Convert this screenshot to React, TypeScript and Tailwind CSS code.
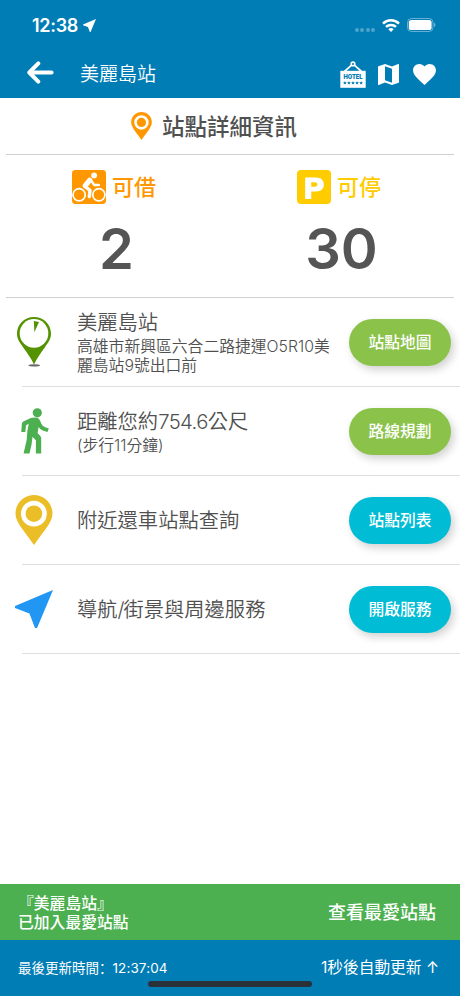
import React from 'react';
import { clsx } from 'clsx';

interface IconProps {
    className?: string;
}

const NearMeIcon: React.FC<IconProps> = ({ className }) => (
    <svg viewBox="3 3 18 18" fill="currentColor" className={className}>
        <path d="M21 3L3 10.53v.98l6.84 2.65L12.48 21h.98L21 3z" />
    </svg>
);

const WifiIcon: React.FC<IconProps> = ({ className }) => (
    <svg viewBox="0 0 18 13" fill="none" stroke="currentColor" strokeWidth="2.5" className={className}>
        <path d="M1 4.6a11.4 11.4 0 0 1 16 0" />
        <path d="M4 7.9a7.2 7.2 0 0 1 10 0" />
        <path d="M9 13L6.3 10.3a3.9 3.9 0 0 1 5.4 0z" fill="currentColor" stroke="none" />
    </svg>
);

const BatteryIcon: React.FC<IconProps> = ({ className }) => (
    <svg viewBox="0 0 29 14" fill="none" className={className}>
        <rect x="0.5" y="0.5" width="25.5" height="13" rx="4" stroke="currentColor" strokeOpacity="0.4" />
        <rect x="1.8" y="2" width="22.8" height="10" rx="2.6" fill="currentColor" />
        <path d="M27.2 4.8v4.4c1.6-.6 1.6-3.8 0-4.4z" fill="currentColor" fillOpacity="0.5" />
    </svg>
);

const BackIcon: React.FC<IconProps> = ({ className }) => (
    <svg viewBox="0 0 27 23" fill="none" stroke="currentColor" strokeWidth="4" strokeLinecap="round" strokeLinejoin="round" className={className}>
        <path d="M11.3 2.4L2.3 11.5l9 9.1M2.8 11.5h21.8" />
    </svg>
);

const HotelIcon: React.FC<IconProps> = ({ className }) => (
    <svg viewBox="0 0 26 27" className={className}>
        <path d="M4.5 10.5L11.3 4.4M21.5 10.5L14.7 4.4" stroke="white" strokeWidth="1.7" fill="none" />
        <circle cx="13" cy="2.9" r="1.8" fill="none" stroke="white" strokeWidth="1.6" />
        <rect x="0.3" y="9.8" width="25.4" height="17" fill="white" />
        <text x="13" y="18.4" textAnchor="middle" textLength="19" lengthAdjust="spacingAndGlyphs" fill="#007db5" fontSize="6.4" fontWeight="900" fontFamily="Inter, sans-serif">HOTEL</text>
        {[4.9, 8.9, 13, 17.1, 21.1].map((x) => (
            <path key={x} transform={`translate(${x} 21.9)`} d="M0-1.7l.6 1.100h1.200l-.9.9.3 1.200L0 .9l-1.200.6.3-1.200-.9-.9h1.200z" fill="#007db5" />
        ))}
    </svg>
);

const MapIcon: React.FC<IconProps> = ({ className }) => (
    <svg viewBox="3 3 18 18" fill="currentColor" className={className}>
        <path d="M20.5 3l-.16.03L15 5.1 9 3 3.36 4.9c-.21.07-.36.25-.36.48V20.5c0 .28.22.5.5.5l.16-.03L9 18.9l6 2.1 5.64-1.9c.21-.07.36-.25.36-.48V3.5c0-.28-.22-.5-.5-.5zM15 19l-6-2.11V5l6 2.11V19z" />
    </svg>
);

const HeartIcon: React.FC<IconProps> = ({ className }) => (
    <svg viewBox="2 3 20 18.35" fill="currentColor" className={className}>
        <path d="M12 21.35l-1.45-1.32C5.4 15.36 2 12.28 2 8.5 2 5.42 4.42 3 7.5 3c1.74 0 3.41.81 4.5 2.09C13.09 3.81 14.76 3 16.5 3 19.58 3 22 5.42 22 8.5c0 3.78-3.4 6.86-8.55 11.54L12 21.35z" />
    </svg>
);

const PinIcon: React.FC<IconProps> = ({ className }) => (
    <svg viewBox="0 0 37 50" className={className}>
        <path d="M18.5 0C8.3 0 0 8.2 0 18.4 0 27.5 9.5 36.6 18.5 50 27.5 36.6 37 27.5 37 18.4 37 8.2 28.7 0 18.5 0z" fill="currentColor" />
        <circle cx="18.4" cy="18.7" r="10.6" fill="none" stroke="white" strokeWidth="4.6" />
    </svg>
);

const GaugePinIcon: React.FC<IconProps> = ({ className }) => (
    <svg viewBox="0 0 34 50" className={className}>
        <ellipse cx="17.2" cy="48.4" rx="5.8" ry="1.2" fill="#6b6b6b" />
        <path d="M17 0C7.6 0 0 7.4 0 16.6 0 22.6 3.4 26.5 6.2 30.4 9.8 35.4 14 41 17 47.4c3-6.4 7.2-12 10.8-17C30.6 26.5 34 22.6 34 16.6 34 7.4 26.4 0 17 0z" fill="#559200" />
        <circle cx="17" cy="16.4" r="14.3" fill="white" />
        <path d="M16.8 4.1l5.2.8-4.6 10.3z" fill="#559200" />
    </svg>
);

const WalkIcon: React.FC<IconProps> = ({ className }) => (
    <svg viewBox="0 0 28 46" fill="currentColor" className={className}>
        <circle cx="16.3" cy="4.8" r="4.6" />
        <path d="M9.800 10.100c2-.8 5.200-.8 6.900-.1 1.500.7 2.300 2.300 3 4.200.9 2.300 2.600 4.400 4.600 5.100l3.500 1.200-1.300 3.600-4.700-1.700c-1.900-.7-3.200-2-4.200-3.400l-1 6.200 2.500 2.500c.7.800 1.100 1.600 1.100 2.700V45.500h-5.300V32.200l-3.400-3.500-1 8.100-2 8.700H2.600l3.100-13.800.7-8.600 1.300-7.300-2.700 1.500-.7 6.700H.3l.5-7.600c.1-1.400.7-2.400 2-3.100z" />
    </svg>
);

const BikeIcon: React.FC<IconProps> = ({ className }) => (
    <svg viewBox="0 0 100 100" fill="none" stroke="white" className={className}>
        <rect width="100" height="100" rx="10" fill="#ff9800" stroke="none" />
        <circle cx="21" cy="73" r="18" strokeWidth="5" />
        <circle cx="79" cy="73" r="18" strokeWidth="5" />
        <circle cx="65" cy="16" r="8.5" fill="white" stroke="none" />
        <path d="M52 30L39 46" strokeWidth="15" strokeLinecap="round" strokeLinejoin="round" />
        <path d="M55 29l10 15h14" strokeWidth="7" strokeLinecap="round" strokeLinejoin="round" />
        <path d="M38 48l15 12-2 18" strokeWidth="10" strokeLinecap="round" strokeLinejoin="round" />
    </svg>
);

const ParkingIcon: React.FC<IconProps> = ({ className }) => (
    <svg viewBox="0 0 100 100" className={className}>
        <rect width="100" height="100" rx="12" fill="#ffcc00" />
        <path fillRule="evenodd" d="M24 22h32c15 0 23 8 23 20.500S71 63 56 63H42v22H24zM42 36v13h9c6 0 9-2 9-6.500s-3-6.500-9-6.500z" fill="white" />
    </svg>
);

interface StatProps {
    icon: React.ReactNode;
    label: string;
    value: number;
    labelClass: string;
}

const Stat: React.FC<StatProps> = ({ icon, label, value, labelClass }) => (
    <div className="flex flex-col items-center w-[110px]">
        <div className="flex items-center gap-[6px] h-[34px]">
            {icon}
            <span className={clsx('text-[22px] leading-[34px] font-medium', labelClass)}>{label}</span>
        </div>
        <span className="mt-[15px] pl-[5px] text-[56px] leading-[60px] font-semibold text-[#555]">{value}</span>
    </div>
);

interface RowProps {
    icon: React.ReactNode;
    title: React.ReactNode;
    detail?: string;
    action: string;
    color: string;
}

const Row: React.FC<RowProps> = ({ icon, title, detail, action, color }) => (
    <div className="h-[89px] flex flex-col">
        <div className="flex-1 flex items-center pr-[9px]">
            <div className="w-[77px] pl-[15px] flex-none">
                <div className="w-[38px] flex justify-center">{icon}</div>
            </div>
            <div className="w-[262px] flex-none pt-px font-[350]">
                <div className="text-[20.3px] leading-[26px] whitespace-nowrap">{title}</div>
                {detail && <div className="mt-px text-[15.8px] leading-[19px]">{detail}</div>}
            </div>
            <button
                className={clsx(
                    'ml-auto w-[102px] h-[47px] pt-[2px] flex-none rounded-full text-white text-[15.8px] font-medium shadow-[3px_4px_9px_rgba(0,0,0,0.18)]',
                    color
                )}
            >
                {action}
            </button>
        </div>
        <div className="h-px ml-[22px] bg-[#dedede]" />
    </div>
);

const App: React.FC = () => {
    return (
        <div className="w-[460px] h-[996px] flex flex-col overflow-hidden bg-white text-[#505050] font-['Inter','Noto_Sans_CJK_TC',sans-serif]">
            <header className="h-[98px] flex-none bg-[#007db5] text-white">
                {/* status bar */}
                <div className="h-[50px] flex items-center pl-[32px] pr-[24px]">
                    <span className="pt-px text-[18px] leading-none font-semibold tracking-[-0.3px]">12:38</span>
                    <NearMeIcon className="ml-[5px] w-[13px] h-[13px]" />
                    <div className="ml-auto flex items-center">
                        <div className="flex gap-[1.5px] mt-[10px] mr-[7px]">
                            {[0, 1, 2, 3].map((i) => (
                                <span key={i} className="w-[4px] h-[4px] rounded-full bg-white/30" />
                            ))}
                        </div>
                        <WifiIcon className="w-[18px] h-[13px] mr-[7px]" />
                        <BatteryIcon className="w-[29px] h-[14px]" />
                    </div>
                </div>
                {/* toolbar */}
                <div className="h-[48px] flex items-center pl-[27px] pr-[24px]">
                    <BackIcon className="w-[27px] h-[23px] -mt-[4px]" />
                    <h1 className="ml-[26px] pt-px text-[19px] leading-none font-[350]">美麗島站</h1>
                    <HotelIcon className="ml-auto w-[26px] h-[27px]" />
                    <MapIcon className="ml-[12px] w-[21px] h-[21px]" />
                    <HeartIcon className="ml-[14px] w-[23px] h-[21px]" />
                </div>
            </header>

            <main className="flex-1 flex flex-col">
                <div className="h-[57px] mx-[6px] flex items-center justify-center border-b border-[#d0d0d0] pr-[32px]">
                    <PinIcon className="w-[21px] h-[28px] text-[#ff9800]" />
                    <h2 className="ml-[10px] pt-px text-[22.5px] font-medium">站點詳細資訊</h2>
                </div>

                <div className="h-[143px] mx-[6px] pt-[15px] pl-[53px] pr-[60px] flex justify-between border-b border-[#d0d0d0]">
                    <Stat icon={<BikeIcon className="w-[34px] h-[34px]" />} label="可借" value={2} labelClass="text-[#ff9800]" />
                    <Stat icon={<ParkingIcon className="w-[34px] h-[34px]" />} label="可停" value={30} labelClass="text-[#ffcc00]" />
                </div>

                <Row
                    icon={<GaugePinIcon className="w-[34px] h-[50px]" />}
                    title="美麗島站"
                    detail="高雄市新興區六合二路捷運O5R10美麗島站9號出口前"
                    action="站點地圖"
                    color="bg-[#8bc34a]"
                />
                <Row
                    icon={<WalkIcon className="ml-[2px] w-[28px] h-[46px] text-[#4caf50]" />}
                    title={<>距離您約<span className="tracking-[-0.6px]">754.6</span>公尺</>}
                    detail="(步行11分鐘)"
                    action="路線規劃"
                    color="bg-[#8bc34a]"
                />
                <Row
                    icon={<PinIcon className="w-[38px] h-[50px] text-[#ebbe27]" />}
                    title="附近還車站點查詢"
                    action="站點列表"
                    color="bg-[#00bcd4]"
                />
                <Row
                    icon={<NearMeIcon className="w-[38px] h-[38px] text-[#2196f3]" />}
                    title={<>導航<span className="tracking-[-1.2px]">/</span>街景與周邊服務</>}
                    action="開啟服務"
                    color="bg-[#00bcd4]"
                />
            </main>

            <div className="h-[56px] flex-none flex items-center justify-between pt-px pl-[18px] pr-[24px] bg-[#4caf50] text-white font-medium">
                <p className="text-[15.8px] leading-[19px]">
                    『美麗島站』
                    <br />
                    已加入最愛站點
                </p>
                <span className="text-[18px]">查看最愛站點</span>
            </div>

            <footer className="relative h-[56px] flex-none flex items-center justify-between pl-[18px] pr-[21px] bg-[#007db5] text-white">
                <span className="text-[13.5px]">
                    最後更新時間<span className="font-['Noto_Sans_CJK_SC']">：</span>
                    <span className="tracking-[0.1px]">12:37:04</span>
                </span>
                <span className="text-[15.7px]">1秒後自動更新 ↑</span>
                {/* home indicator */}
                <div className="absolute left-[148px] bottom-[9px] w-[164px] h-[6px] rounded-full bg-[#2b3138]" />
            </footer>
        </div>
    );
};

export default App;
